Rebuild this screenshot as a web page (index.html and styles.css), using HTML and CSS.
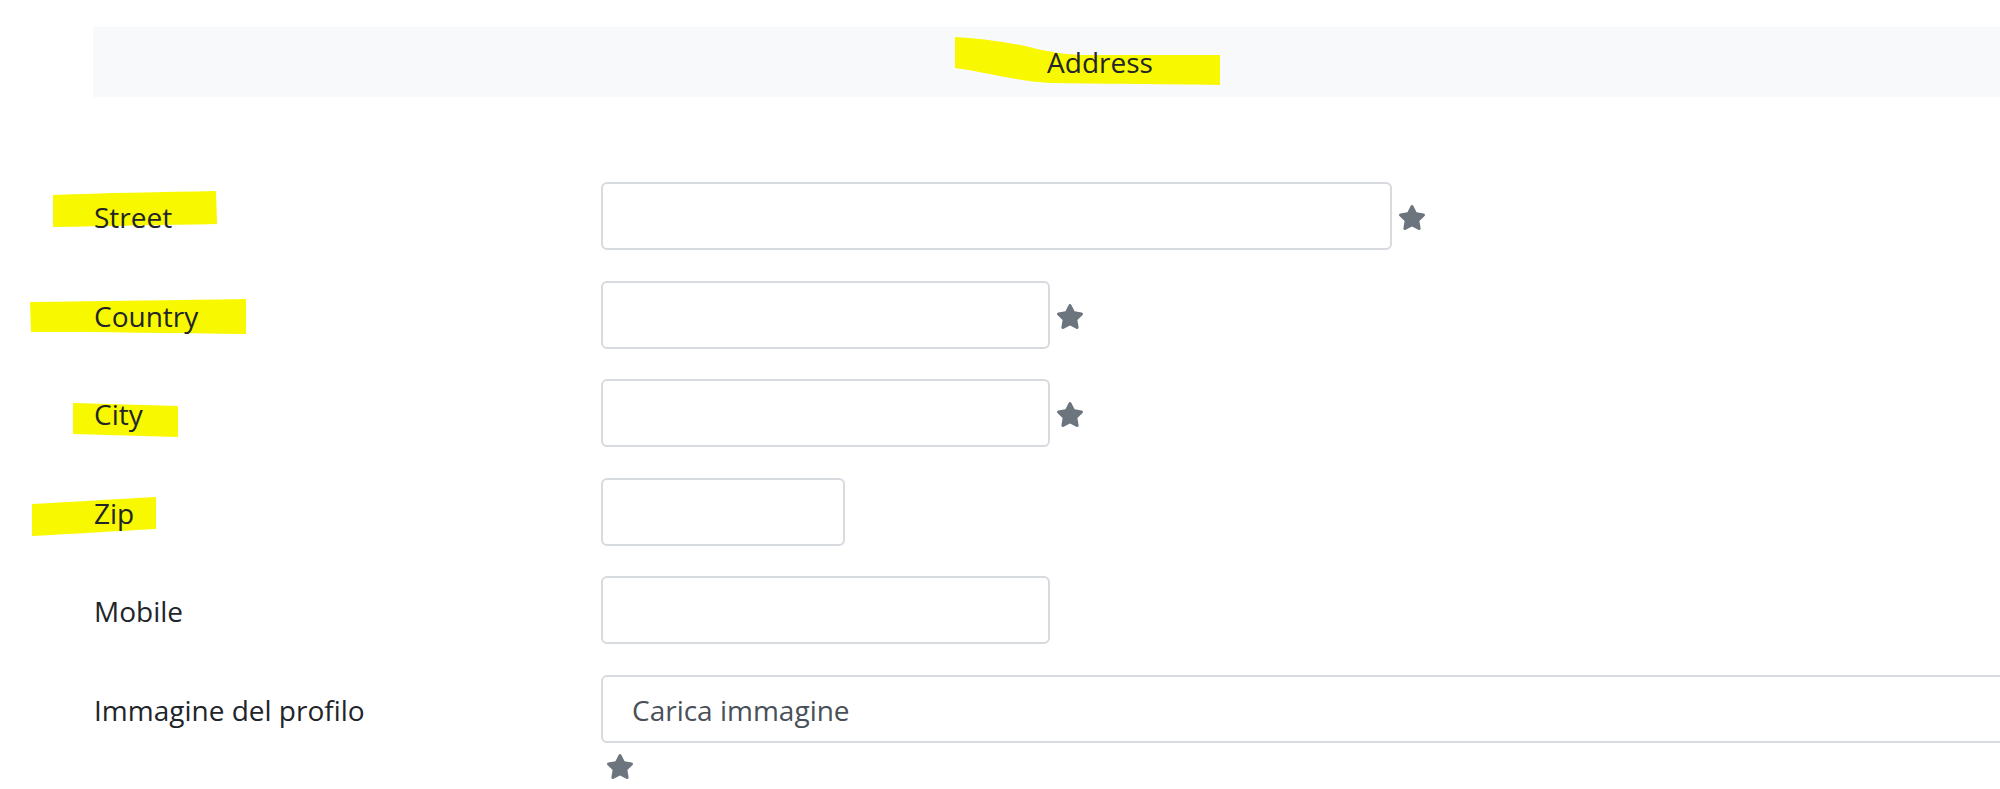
FILE: index.html
```html
<!DOCTYPE html>
<html lang="en">

<head>
    <meta charset="UTF-8">
    <meta name="viewport" content="width=device-width, initial-scale=1.0">
    <title>Address</title>
    <link rel="stylesheet" href="styles.css">
</head>

<body>
    <div id="container">
        <div class="section-title">
            <svg class="marker marker-address" width="266" height="49" viewBox="0 0 266 49">
                <path d="M0 0 C20 1 45 4 70 9 C90 14 105 17 125 18 L265 18 L265 48 C200 47 130 47 95 46 C60 44 25 34 0 31 Z" />
            </svg>
            <span class="title-text">Address</span>
        </div>

        <form class="form">
            <div class="form-row">
                <svg class="marker" style="left:-40px;top:9px" width="164" height="37" viewBox="0 0 164 37">
                    <path d="M0 4 C50 2 110 1 163 0 L164 33 C110 34 50 35 0 36 Z" />
                </svg>
                <label class="form-label" for="street">Street</label>
                <div class="field">
                    <div class="field-line">
                        <input class="form-control w-long" id="street" type="text">
                        <svg class="star" viewBox="0 0 576 512"><path d="M259.3 17.8L194 150.2 47.9 171.5c-26.2 3.8-36.7 36.1-17.7 54.6l105.7 103-25 145.5c-4.5 26.3 23.2 46 46.4 33.7L288 439.6l130.7 68.7c23.2 12.2 50.9-7.4 46.4-33.7l-25-145.5 105.7-103c19-18.5 8.5-50.8-17.7-54.6L382 150.2 316.7 17.8c-11.7-23.6-45.6-23.9-57.4 0z" /></svg>
                    </div>
                </div>
            </div>

            <div class="form-row">
                <svg class="marker" style="left:-63px;top:18px" width="217" height="36" viewBox="0 0 217 36">
                    <path d="M0 3 C70 2 150 1 216 0 L216 35 C150 34 70 33 1 33 Z" />
                </svg>
                <label class="form-label" for="country">Country</label>
                <div class="field">
                    <div class="field-line">
                        <input class="form-control w-mid" id="country" type="text">
                        <svg class="star" viewBox="0 0 576 512"><path d="M259.3 17.8L194 150.2 47.9 171.5c-26.2 3.8-36.7 36.1-17.7 54.6l105.7 103-25 145.5c-4.5 26.3 23.2 46 46.4 33.7L288 439.6l130.7 68.7c23.2 12.2 50.9-7.4 46.4-33.7l-25-145.5 105.7-103c19-18.5 8.5-50.8-17.7-54.6L382 150.2 316.7 17.8c-11.7-23.6-45.6-23.9-57.4 0z" /></svg>
                    </div>
                </div>
            </div>

            <div class="form-row">
                <svg class="marker" style="left:-20px;top:24px" width="106" height="35" viewBox="0 0 106 35">
                    <path d="M0 0 C35 1 70 2 105 3 L105 34 C70 33 35 32 0 31 Z" />
                </svg>
                <label class="form-label" for="city">City</label>
                <div class="field">
                    <div class="field-line">
                        <input class="form-control w-mid" id="city" type="text">
                        <svg class="star" viewBox="0 0 576 512"><path d="M259.3 17.8L194 150.2 47.9 171.5c-26.2 3.8-36.7 36.1-17.7 54.6l105.7 103-25 145.5c-4.5 26.3 23.2 46 46.4 33.7L288 439.6l130.7 68.7c23.2 12.2 50.9-7.4 46.4-33.7l-25-145.5 105.7-103c19-18.5 8.5-50.8-17.7-54.6L382 150.2 316.7 17.8c-11.7-23.6-45.6-23.9-57.4 0z" /></svg>
                    </div>
                </div>
            </div>

            <div class="form-row">
                <svg class="marker" style="left:-61px;top:19px" width="125" height="40" viewBox="0 0 125 40">
                    <path d="M0 7 C40 5 85 2 124 0 L124 32 C85 34 40 37 0 39 Z" />
                </svg>
                <label class="form-label" for="zip">Zip</label>
                <div class="field">
                    <input class="form-control w-short" id="zip" type="text">
                </div>
            </div>

            <div class="form-row">
                <label class="form-label" for="mobile">Mobile</label>
                <div class="field">
                    <input class="form-control w-mid" id="mobile" type="text">
                </div>
            </div>

            <div class="form-row">
                <label class="form-label" for="avatar">Immagine del profilo</label>
                <div class="field field-wide">
                    <div class="custom-file">
                        <input class="file-input" id="avatar" type="file">
                        <label class="file-label" for="avatar">Carica immagine</label>
                    </div>
                    <svg class="star star-below" viewBox="0 0 576 512"><path d="M259.3 17.8L194 150.2 47.9 171.5c-26.2 3.8-36.7 36.1-17.7 54.6l105.7 103-25 145.5c-4.5 26.3 23.2 46 46.4 33.7L288 439.6l130.7 68.7c23.2 12.2 50.9-7.4 46.4-33.7l-25-145.5 105.7-103c19-18.5 8.5-50.8-17.7-54.6L382 150.2 316.7 17.8c-11.7-23.6-45.6-23.9-57.4 0z" /></svg>
                </div>
            </div>
        </form>
    </div>
</body>

</html>
```

FILE: styles.css
```css
html,
body {
    margin: 0;
    overflow: hidden;
}

body {
    font-family: "Open Sans", "Liberation Sans", sans-serif;
    font-size: 28px;
    color: #212529;
    background: #fff;
}

#container {
    padding: 27px 0 0 93px;
}

/* title bar, runs past the right edge of the window */
.section-title {
    position: relative;
    height: 70px;
    line-height: 70px;
    margin-right: -107px;
    background: #f8f9fa;
    text-align: center;
}

.title-text {
    position: relative;
}

.marker {
    position: absolute;
    fill: #f8f800;
}

.marker-address {
    left: 862px;
    top: 10px;
}

.form {
    margin-top: 85px;
    margin-right: -107px;
}

.form-row {
    position: relative;
    display: flex;
    align-items: flex-start;
    margin-bottom: 29.6px;
}

.form-label {
    position: relative;
    flex: 0 0 508px;
    line-height: 68px;
    padding-top: 1px;
    padding-left: 1px;
    box-sizing: border-box;
}

.field {
    display: flex;
    flex-direction: column;
}

.field-wide {
    flex: 1;
}

.field-line {
    display: flex;
    align-items: center;
}

.form-control {
    height: 68px;
    box-sizing: border-box;
    border: 2px solid #d7dadf;
    border-radius: 6px;
    background: #fff;
    font: inherit;
    padding: 0 28px;
    margin: 0;
    outline: none;
}

.w-long {
    width: 791px;
}

.w-mid {
    width: 449px;
}

.w-short {
    width: 244px;
}

.star {
    width: 28px;
    height: 25px;
    margin: 3px 0 0 6px;
    fill: #6c757d;
}

.star-below {
    margin: 11px 0 0 5px;
}

.custom-file {
    position: relative;
    height: 68px;
}

.file-input {
    display: none;
}

.file-label {
    display: block;
    height: 68px;
    box-sizing: border-box;
    border: 2px solid #d7dadf;
    border-radius: 6px;
    padding: 2px 0 0 29px;
    line-height: 62px;
    color: #495057;
}
```
